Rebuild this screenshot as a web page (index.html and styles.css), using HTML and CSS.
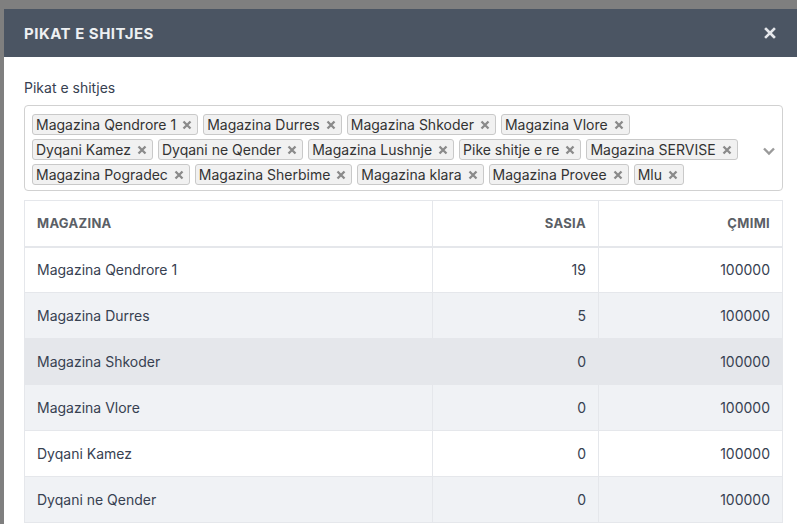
FILE: index.html
```html
<!DOCTYPE html>
<html lang="sq">
<head>
    <meta charset="UTF-8">
    <meta name="viewport" content="width=device-width, initial-scale=1.0">
    <title>Pikat e shitjes</title>
    <link rel="stylesheet" href="styles.css">
</head>
<body>
    <div class="overlay">
        <div class="modal">
            <div class="modal-header">
                <h3>Pikat e shitjes</h3>
                <button class="close" aria-label="Mbyll">
                    <svg width="12" height="12" viewBox="0 0 12 12"><path d="M2 2 L10 10 M10 2 L2 10" stroke="currentColor" stroke-width="2.6" stroke-linecap="square"/></svg>
                </button>
            </div>
            <div class="modal-body">
                <label class="field-label">Pikat e shitjes</label>
                <div class="multiselect">
                    <div class="tags" id="tags"></div>
                    <svg class="chevron" width="14" height="10" viewBox="0 0 14 10"><path d="M2 2.5 L7 7.5 L12 2.5" fill="none" stroke="currentColor" stroke-width="2.4"/></svg>
                </div>

                <table class="stock">
                    <thead>
                        <tr>
                            <th>Magazina</th>
                            <th class="num">Sasia</th>
                            <th class="num">Çmimi</th>
                        </tr>
                    </thead>
                    <tbody id="rows"></tbody>
                </table>
            </div>
        </div>
    </div>

    <script>
        const pikat = [
            'Magazina Qendrore 1', 'Magazina Durres', 'Magazina Shkoder', 'Magazina Vlore',
            'Dyqani Kamez', 'Dyqani ne Qender', 'Magazina Lushnje', 'Pike shitje e re',
            'Magazina SERVISE', 'Magazina Pogradec', 'Magazina Sherbime', 'Magazina klara',
            'Magazina Provee', 'Mlu'
        ];
        const gjendja = [
            { emri: 'Magazina Qendrore 1', sasia: 19, cmimi: 100000 },
            { emri: 'Magazina Durres', sasia: 5, cmimi: 100000 },
            { emri: 'Magazina Shkoder', sasia: 0, cmimi: 100000 },
            { emri: 'Magazina Vlore', sasia: 0, cmimi: 100000 },
            { emri: 'Dyqani Kamez', sasia: 0, cmimi: 100000 },
            { emri: 'Dyqani ne Qender', sasia: 0, cmimi: 100000 }
        ];

        const xIcon = '<svg width="10" height="10" viewBox="0 0 10 10"><path d="M1.5 1.5 L8.5 8.5 M8.5 1.5 L1.5 8.5" stroke="currentColor" stroke-width="2.3"/></svg>';

        const tags = document.getElementById('tags');
        pikat.forEach(function (p) {
            const tag = document.createElement('span');
            tag.className = 'tag';
            tag.innerHTML = '<span>' + p + '</span><i class="tag-x">' + xIcon + '</i>';
            tags.appendChild(tag);
        });

        const rows = document.getElementById('rows');
        gjendja.forEach(function (g, i) {
            const tr = document.createElement('tr');
            if (i === 2) tr.className = 'hover';
            tr.innerHTML = '<td>' + g.emri + '</td><td class="num">' + g.sasia + '</td><td class="num">' + g.cmimi + '</td>';
            rows.appendChild(tr);
        });
    </script>
</body>
</html>
```

FILE: styles.css
```css
* {
    box-sizing: border-box;
}
body {
    margin: 0;
    font-family: Inter, "Noto Sans", Arial, sans-serif;
    background: #7f7f7f;
    overflow: hidden;
}
.overlay {
    height: 524px;
    padding: 9px 0 0 4px;
}
.modal {
    width: 799px;
    background: #fff;
    height: 515px;
    overflow: hidden;
}
.modal-header {
    height: 48px;
    background: #4b5563;
    display: flex;
    align-items: center;
    justify-content: space-between;
    padding: 0 27px 0 20px;
}
.modal-header h3 {
    margin: 0;
    font-size: 15px;
    font-weight: 700;
    text-transform: uppercase;
    letter-spacing: 0.5px;
    color: #eef0f2;
}
.close {
    background: none;
    border: none;
    padding: 0;
    color: #e5e7eb;
    display: flex;
}
.modal-body {
    padding: 21px 20px 0 20px;
}
.field-label {
    display: block;
    font-size: 14px;
    line-height: 20px;
    color: #374151;
}
.multiselect {
    margin-top: 7px;
    border: 1px solid #d1d1d1;
    border-radius: 4px;
    padding: 8px 40px 4px 7px;
    position: relative;
    min-height: 86px;
}
.tags {
    display: flex;
    flex-wrap: wrap;
    gap: 4px 5px;
}
.tag {
    display: inline-flex;
    align-items: center;
    height: 21px;
    padding: 0 5px 0 3px;
    background: #f1f1f1;
    border: 1px solid #c9c9c9;
    border-radius: 3px;
    font-size: 14px;
    color: #333;
    white-space: nowrap;
}
.tag-x {
    display: flex;
    margin-left: 6px;
    color: #8a8a8a;
}
.chevron {
    position: absolute;
    right: 6px;
    top: 40px;
    color: #9a9a9a;
}
.stock {
    margin-top: 9px;
    width: 759px;
    border-collapse: collapse;
    border: 1px solid #e5e7eb;
    font-size: 14px;
    color: #374151;
}
.stock th {
    height: 46px;
    padding: 0 12px;
    text-align: left;
    font-size: 13px;
    font-weight: 700;
    letter-spacing: 0.3px;
    text-transform: uppercase;
    color: #5b5f66;
    border-bottom: 2px solid #e5e7eb;
    border-left: 1px solid #e5e7eb;
}
.stock td {
    height: 46px;
    padding: 0 12px;
    border-top: 1px solid #e5e7eb;
    border-left: 1px solid #e5e7eb;
}
.stock th:first-child {
    width: 408px;
}
.stock th:nth-child(2) {
    width: 166px;
}
.stock th:first-child,
.stock td:first-child {
    border-left: none;
}
.stock .num {
    text-align: right;
}
.stock tbody tr:nth-child(even) {
    background: #f0f2f5;
}
.stock tbody tr.hover {
    background: #e5e7eb;
}
```
